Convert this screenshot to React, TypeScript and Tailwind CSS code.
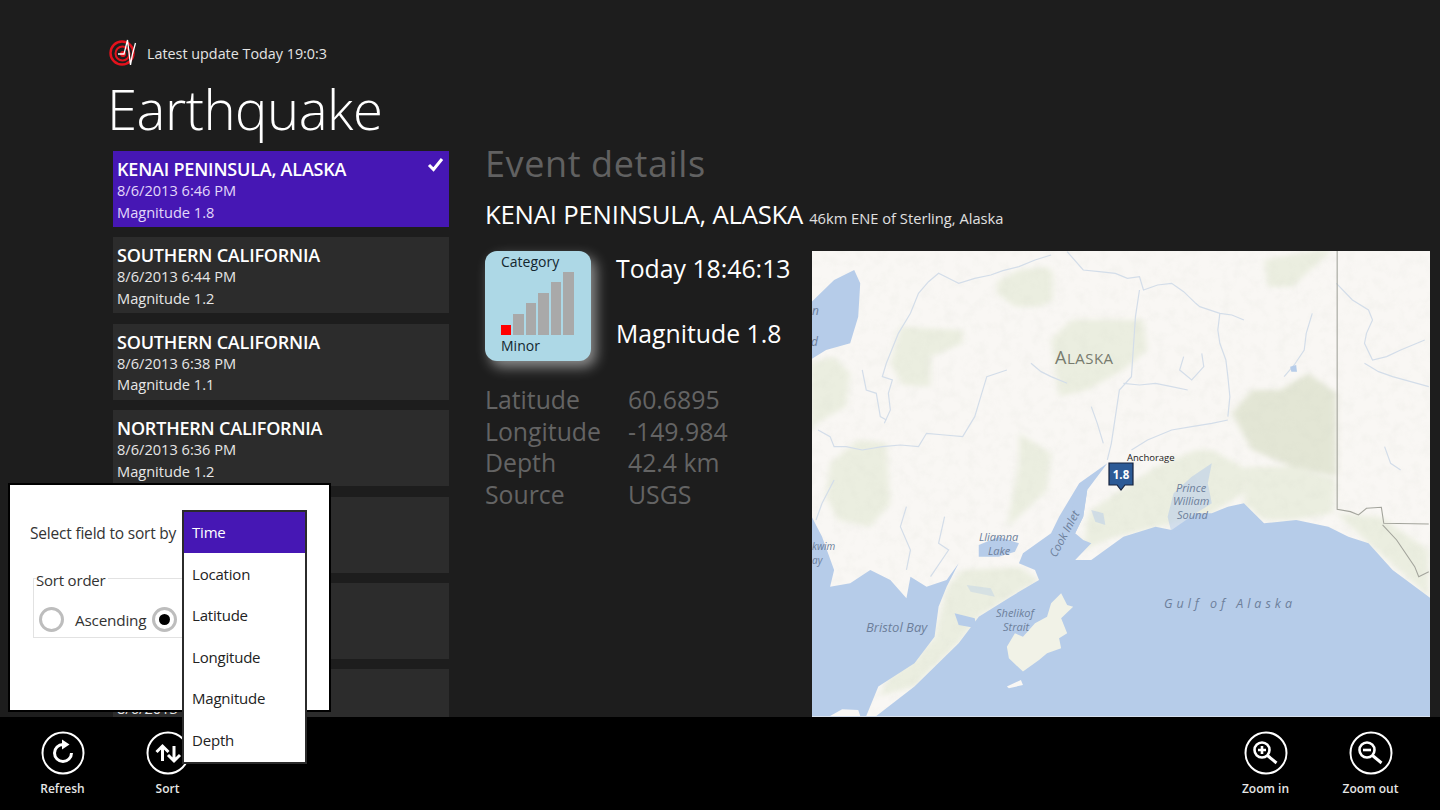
import React from 'react';

const FONT = "font-['Open_Sans','Noto_Sans',sans-serif]";

const rows = [
  { title: 'KENAI PENINSULA, ALASKA', date: '8/6/2013 6:46 PM', mag: 'Magnitude 1.8', selected: true },
  { title: 'SOUTHERN CALIFORNIA', date: '8/6/2013 6:44 PM', mag: 'Magnitude 1.2' },
  { title: 'SOUTHERN CALIFORNIA', date: '8/6/2013 6:38 PM', mag: 'Magnitude 1.1' },
  { title: 'NORTHERN CALIFORNIA', date: '8/6/2013 6:36 PM', mag: 'Magnitude 1.2' },
  { title: '', date: '', mag: '' },
  { title: '', date: '', mag: '' },
  { title: '', date: '8/6/2013', mag: '' },
];

const details = [
  ['Latitude', '60.6895'],
  ['Longitude', '-149.984'],
  ['Depth', '42.4 km'],
  ['Source', 'USGS'],
];

const bars = ['h-[21px]', 'h-[32px]', 'h-[42px]', 'h-[53px]', 'h-[63px]'];

const sortFields = ['Location', 'Latitude', 'Longitude', 'Magnitude', 'Depth'];

const greens = [
  'M465 95L520 60 590 50 605 70 605 150 570 170 510 170 465 130Z',
  'M1130 30L1260 0 1300 0 1200 110 1140 110Z',
  'M600 270L650 210 830 210 840 300 780 360 690 420 620 440Z',
  'M225 230L380 240 380 280 300 320 300 410 230 405 200 340Z',
  'M0 340L60 320 100 370 90 470 30 510 0 540Z',
  'M50 640L120 570 190 580 200 760 150 830 70 810 40 740Z',
  'M520 550L600 610 590 720 520 800 490 830 520 640Z',
  'M700 780L860 650 960 600 1000 600 1060 640 1090 660 1080 730 1040 760 1000 790 870 830 760 860 680 900 690 800Z',
  'M1090 650L1200 650 1310 690 1300 790 1200 810 1130 810 1080 760Z',
  'M380 960L520 950 570 990 500 1040 420 1100 370 1180 310 1160 340 1010Z',
  'M310 1160L370 1180 260 1310 170 1340 200 1280 260 1230Z',
  'M1310 790L1420 800 1540 900 1540 1040 1390 880Z',
];

const rivers = [
  'M600 15L560 30 520 50 480 62 450 75 410 85 370 100 345 85 320 70 295 95 270 130 250 190 220 250 205 295 190 340 180 380 205 390 195 430 200 480 185 520',
  'M130 360L140 420 165 430 175 500 190 510',
  'M550 340L575 365 600 380 640 400',
  'M490 360L440 380 425 440 410 500 380 560 335 555 290 550 270 590 225 585 180 590 130 600 90 590 60 590 50 560 20 540',
  'M640 5L680 60 720 65 760 70 790 85 820 80 830 120 865 105 900 100 930 125 960 160 970 170 1020 190 1050 195 1080 210',
  'M1020 190L1015 240 1020 280 1035 330 1040 380 1045 440 1040 500',
  'M820 120L810 200 805 290 800 380 770 420 760 500 750 580 740 630',
  'M780 400L820 405 860 400 900 410 940 420',
  'M700 470L715 520 730 580',
  'M1040 510L1000 520 950 530 900 540 840 570 800 600',
  'M1310 100L1350 150 1390 180 1400 210 1385 250 1380 280 1400 330 1435 320 1470 300 1530 270',
  'M1380 340L1415 365 1450 380 1495 395 1540 410',
  'M1250 190L1235 250 1230 300 1205 345 1180 380',
  'M930 320L920 360 950 390 980 350 975 310',
  'M1430 590L1445 640 1470 660',
  'M240 770L225 830 250 900 240 960',
  'M60 690L30 760 15 810',
  'M335 800L320 880 345 900 300 980',
];

const WATER =
  'M0 790L30 860 60 960 50 1010 100 1000 150 960 200 990 240 1045 250 980 290 1010 340 990 370 940 340 1010 320 1070 310 1160 260 1240 170 1310 140 1398 165 1398 260 1310 370 1180 420 1100 500 1040 570 990 560 960 520 940 530 910 600 850 620 800 670 700 740 640 690 720 680 800 660 850 680 870 700 880 660 930 700 930 780 860 860 830 900 840 960 790 1000 790 1040 770 1080 760 1130 820 1210 810 1290 830 1340 860 1390 880 1450 960 1545 1045 1545 1400 0 1400Z';

const Logo = () => (
  <svg width="30" height="28" viewBox="0 0 30 28" fill="none">
    <circle cx="13" cy="14" r="11.5" stroke="#e3121c" strokeWidth="2.4" />
    <circle cx="13.5" cy="14.5" r="7" stroke="#e3121c" strokeWidth="2" />
    <circle cx="14" cy="15" r="3" fill="#e3121c" />
    <path d="M9 15h6l3.5-14 3 25 2-11 3-11" stroke="#fff" strokeWidth="1.3" />
  </svg>
);

const BarButton = ({ label, children }: { label: string; children: React.ReactNode }) => (
  <div className="flex w-[105px] flex-col items-center">
    <svg width="44" height="44" viewBox="0 0 44 44" fill="none" stroke="#fff" strokeWidth="2.6">
      <circle cx="22" cy="22" r="20.5" strokeWidth="2" />
      {children}
    </svg>
    <span className="mt-[4px] text-[12px] font-semibold leading-[20px] text-[#e6e6e6]">{label}</span>
  </div>
);

const AlaskaMap = () => (
  <svg viewBox="812 251 618 466" className="block h-full w-full" fontFamily="'Open Sans', sans-serif">
    <defs>
      <filter id="soft" x="-10%" y="-10%" width="120%" height="120%">
        <feGaussianBlur stdDeviation="8" />
      </filter>
      <filter id="grain" x="0" y="0" width="100%" height="100%">
        <feTurbulence type="fractalNoise" baseFrequency="0.09" numOctaves="3" seed="4" />
        <feColorMatrix values="0 0 0 0 0.55  0 0 0 0 0.58  0 0 0 0 0.5  0 0 0.9 0 -0.38" />
      </filter>
    </defs>

    <rect x="812" y="251" width="618" height="466" fill="#f9f7f4" />

    {/* same scale as the crop I traced it from */}
    <g transform="translate(810 250) scale(0.4018 0.3333)">
      <g fill="#ebeee0" filter="url(#soft)">
        {greens.map((d, i) => (
          <path key={i} d={d} />
        ))}
        <path d="M1050 490L1100 420 1170 420 1240 370 1310 430 1310 680 1200 650 1100 600Z" fill="#e3e6d5" />
      </g>
    </g>

    <rect x="812" y="251" width="618" height="466" filter="url(#grain)" opacity="0.2" />

    <g transform="translate(810 250) scale(0.4018 0.3333)">
      <g fill="none" stroke="#d3dde9" strokeWidth="1.2">
        {rivers.map((d, i) => (
          <path key={i} d={d} vectorEffect="non-scaling-stroke" />
        ))}
      </g>

      <g fill="#b6cce9">
        <path d={WATER} />
        <path d="M0 160L60 90 110 60 125 100 120 200 100 280 40 300 0 330Z" />
        <path d="M420 885L470 860 520 880 510 905 470 920 420 920Z" />
        <path d="M905 730L950 680 1000 640 990 700 1000 760 960 790 930 830 900 850 890 800Z" opacity="0.55" />
        <path d="M660 730L690 720 680 800 660 850 650 800Z" />
        <path d="M360 1090L410 1105 415 1135 370 1125Z" />
        <path d="M700 780L730 790 735 825 710 815Z" opacity="0.5" />
        <path d="M1195 350L1210 345 1212 365 1198 365Z" />
        <path d="M390 1005L450 1015 460 1040 400 1025Z" opacity="0.4" />
      </g>

      <path
        d="M490 1190L510 1150 530 1160 560 1120 590 1100 600 1060 625 1030 640 1065 655 1070 625 1105 640 1150 620 1165 625 1195 590 1210 570 1230 530 1265 495 1225Z"
        fill="#f1f2e7"
      />
      <path d="M50 1398L80 1378 120 1380 125 1398Z" fill="#f9f7f4" />
      <path d="M490 1310L525 1290 530 1305 495 1315Z" fill="#f9f7f4" />

      <path
        d="M1312 0V778L1345 785 1365 795 1385 775 1422 772 1428 820 1540 822M1425 825L1460 870 1505 950 1515 980 1540 965"
        fill="none"
        stroke="#a3a49c"
        strokeWidth="1.1"
        vectorEffect="non-scaling-stroke"
      />
    </g>

    <text x="1055" y="364" fontSize="18" fill="#777b6e" letterSpacing="0.5">A<tspan fontSize="15">LASKA</tspan></text>
    <text x="1127" y="461" fontSize="9.5" fill="#222">Anchorage</text>

    <g fontStyle="italic" fill="#6d7f9b">
      <text x="812" y="315" fontSize="12">n</text>
      <text x="811" y="346" fontSize="12">d</text>
      <text x="812" y="550" fontSize="10">kwim</text>
      <text x="812" y="564" fontSize="10">ay</text>
      <text x="866" y="632" fontSize="13">Bristol Bay</text>
      <text x="979" y="541" fontSize="11">Lliamna</text>
      <text x="988" y="555" fontSize="11">Lake</text>
      <text x="996" y="617" fontSize="11">Shelikof</text>
      <text x="1003" y="631" fontSize="11">Strait</text>
      <text x="1176" y="492" fontSize="11">Prince</text>
      <text x="1173" y="505" fontSize="11">William</text>
      <text x="1177" y="519" fontSize="11">Sound</text>
      <text x="1056" y="558" fontSize="11.5" transform="rotate(-62 1056 558)">Cook Inlet</text>
      <text x="1164" y="608" fontSize="12.5" letterSpacing="4">Gulf of Alaska</text>
    </g>

    {/* pin */}
    <path d="M1109 463h24v22h-8l-4 5 -4-5h-8z" fill="#2c5a96" stroke="#16223c" strokeWidth="1.2" />
    <text x="1121" y="479" fontSize="11.5" fontWeight="700" fill="#fff" textAnchor="middle">1.8</text>
  </svg>
);

export default function App() {
  return (
    <div className={`relative flex h-[810px] w-[1440px] flex-col overflow-hidden bg-[#1d1d1d] text-white ${FONT}`}>
      <main className="flex min-h-0 flex-1 flex-col pl-[107px]">
        <div className="ml-[2px] mt-[39px] flex h-[28px] items-center gap-[8px]">
          <Logo />
          <span className="pt-[1px] text-[14.35px] text-[#e4e4e4]">Latest update Today 19:0:3</span>
        </div>
        <h1 className="mt-[3px] h-[81px] text-[54.5px] font-light leading-[78px] tracking-[-0.5px]">Earthquake</h1>

        <div className="flex min-h-0 flex-1 pl-[6px]">
          <ul className="flex w-[336px] shrink-0 flex-col gap-[10.4px] overflow-hidden">
            {rows.map((row, i) => (
              <li
                key={i}
                className={`relative h-[76px] shrink-0 px-[4px] pt-[6px] ${row.selected ? 'bg-[#4617b4]' : 'bg-[#2c2c2c]'}`}
              >
                <div className="h-[24px] text-[18px] font-semibold leading-[24px] tracking-[-0.2px]">{row.title}</div>
                <div className={`-mt-[1px] text-[14.6px] leading-[21.5px] ${row.selected ? 'text-[#e2d8fa]' : 'text-[#e6e6e6]'}`}>{row.date}</div>
                <div className={`text-[14.6px] leading-[21.5px] ${row.selected ? 'text-[#e2d8fa]' : 'text-[#e6e6e6]'}`}>{row.mag}</div>
                {row.selected && (
                  <svg className="absolute right-[5px] top-[6px]" width="17" height="15" viewBox="0 0 17 15" fill="none">
                    <path d="M2 8l4.5 4.5L15 2" stroke="#fff" strokeWidth="3" />
                  </svg>
                )}
              </li>
            ))}
          </ul>

          <section className="ml-[36px] flex min-w-0 flex-1 flex-col pr-[10px]">
            <h2 className="-mt-[12px] h-[50px] text-[36px] leading-[50px] tracking-[0.6px] text-[#616161]">Event details</h2>
            <div className="mt-[9px] flex h-[34px] items-baseline gap-[6px] leading-[34px]">
              <span className="text-[25.7px] tracking-[-0.2px]">KENAI PENINSULA, ALASKA</span>
              <span className="text-[14.7px] text-[#e0e0e0]">46km ENE of Sterling, Alaska</span>
            </div>

            <div className="mt-[19px] flex min-h-0 flex-1">
              <div className="w-[327px] shrink-0">
                <div className="flex">
                  <div className="flex h-[110px] w-[106px] shrink-0 flex-col rounded-[12px] bg-[#add8e6] px-[16px] text-[14px] leading-[20px] text-[#13262e] shadow-[5px_6px_13px_rgba(255,255,255,0.5)]">
                    <div className="mt-[1px]">Category</div>
                    <div className="flex h-[63px] items-end gap-[2px]">
                      <div className="h-[10px] w-[10px] bg-[#ff0000]" />
                      {bars.map(h => (
                        <div key={h} className={`w-[10.5px] bg-[#a9a9a9] ${h}`} />
                      ))}
                    </div>
                    <div className="mt-[1px]">Minor</div>
                  </div>
                  <div className="ml-[25px] flex flex-col text-[24.8px] leading-[34px]">
                    <div>Today 18:46:13</div>
                    <div className="mt-[31px]">Magnitude 1.8</div>
                  </div>
                </div>

                <dl className="mt-[23px] grid grid-cols-[143px_1fr] text-[24.8px] leading-[31.7px] text-[#646464]">
                  {details.map(([k, v]) => (
                    <React.Fragment key={k}>
                      <dt>{k}</dt>
                      <dd>{v}</dd>
                    </React.Fragment>
                  ))}
                </dl>
              </div>
              <div className="min-w-0 flex-1">
                <AlaskaMap />
              </div>
            </div>
          </section>
        </div>
      </main>

      <footer className="flex h-[93px] shrink-0 items-start justify-between bg-black pl-[10px] pr-[17px] pt-[14px]">
        <div className="flex">
          <BarButton label="Refresh">
            <path d="M30.5 22A8.5 8.5 0 1 1 22 13.5" strokeWidth="3" />
            <path d="M21 8.5l7.5 5-7.5 5z" fill="#fff" stroke="none" />
          </BarButton>
          <BarButton label="Sort">
            <path d="M16.5 30V15M10.5 21l6-6 6 6" strokeWidth="3" />
            <path d="M28 15v15M22 24l6 6 6-6" strokeWidth="3" />
          </BarButton>
        </div>
        <div className="flex">
          <BarButton label="Zoom in">
            <circle cx="18" cy="19" r="7.5" />
            <path d="M23.5 24.5l9 7.5" strokeWidth="3" />
            <path d="M14 19h8M18 15v8" />
          </BarButton>
          <BarButton label="Zoom out">
            <circle cx="18" cy="19" r="7.5" />
            <path d="M23.5 24.5l9 7.5" strokeWidth="3" />
            <path d="M14 19h8" />
          </BarButton>
        </div>
      </footer>

      {/* sort flyout */}
      <div className="absolute left-[8px] top-[483px] h-[229px] w-[323px] overflow-hidden border-2 border-black bg-white text-[#333]">
        <div className="ml-[20px] mt-[37px] text-[15.5px] leading-[22px] tracking-[-0.2px]">Select field to sort by</div>
        <div className="relative ml-[23px] mt-[34px] h-[60px] w-[170px] border border-[#e2e2e2]">
          <span className="absolute left-[2px] -top-[8px] bg-white pr-[2px] text-[15px] leading-[18px] tracking-[-0.2px]">Sort order</span>
          <div className="flex items-center pl-[5px] pt-[28px]">
            <span className="h-[25px] w-[25px] rounded-full border-[3px] border-[#bdbdbd]" />
            <span className="ml-[11px] text-[15.3px] leading-[20px] tracking-[-0.2px]">Ascending</span>
            <span className="ml-[6px] flex h-[25px] w-[25px] items-center justify-center rounded-full border-[3px] border-[#bdbdbd]">
              <span className="h-[11px] w-[11px] rounded-full bg-black" />
            </span>
          </div>
        </div>
      </div>

      <ul className="absolute left-[182px] top-[510px] h-[254px] w-[125px] border-2 border-[#2b2b2b] bg-white text-[15px] text-[#222]">
        <li className="flex h-[41px] items-center bg-[#4617b4] pl-[8px] tracking-[-0.2px] text-white">Time</li>
        {sortFields.map(f => (
          <li key={f} className="flex h-[41.6px] items-center pl-[8px] tracking-[-0.2px]">{f}</li>
        ))}
      </ul>
    </div>
  );
}
